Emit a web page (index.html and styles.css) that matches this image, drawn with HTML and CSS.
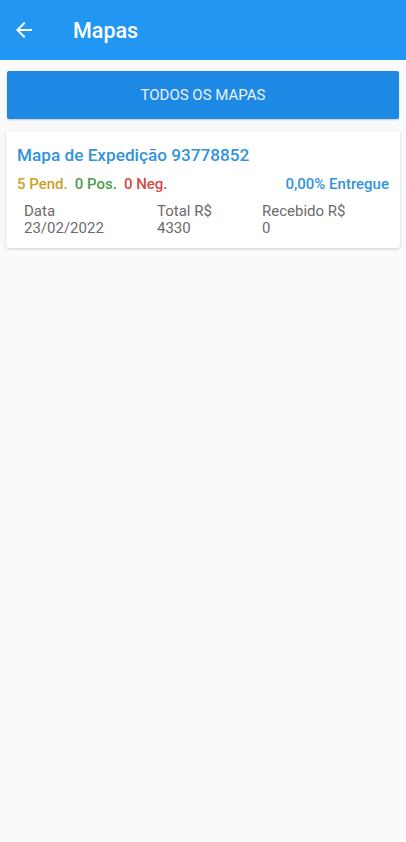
FILE: index.html
```html
<!DOCTYPE html>
<html lang="pt-BR">
<head>
    <meta charset="UTF-8">
    <meta name="viewport" content="width=device-width, initial-scale=1.0">
    <title>Mapas</title>
    <link rel="stylesheet" href="styles.css">
</head>
<body>
    <header class="app-bar">
        <button class="back-btn" aria-label="Voltar">
            <svg width="24" height="24" viewBox="0 0 24 24"><path d="M20 11H7.83l5.59-5.59L12 4l-8 8 8 8 1.41-1.41L7.83 13H20v-2z" fill="#fff"/></svg>
        </button>
        <h1 class="app-title">Mapas</h1>
    </header>

    <main class="content">
        <button class="all-btn">TODOS OS MAPAS</button>

        <div class="map-card">
            <h2 class="map-title">Mapa de Expedição 93778852</h2>
            <div class="status-row">
                <div class="counts">
                    <span class="pend">5 Pend.</span>
                    <span class="pos">0 Pos.</span>
                    <span class="neg">0 Neg.</span>
                </div>
                <span class="delivered">0,00% Entregue</span>
            </div>
            <div class="info-grid">
                <div class="info-col">
                    <span>Data</span>
                    <span>23/02/2022</span>
                </div>
                <div class="info-col">
                    <span>Total R$</span>
                    <span>4330</span>
                </div>
                <div class="info-col">
                    <span>Recebido R$</span>
                    <span>0</span>
                </div>
            </div>
        </div>
    </main>
</body>
</html>
```

FILE: styles.css
```css
body {
    margin: 0;
    font-family: Roboto, "Noto Sans", Arial, sans-serif;
    background-color: #fafafa;
    color: #666;
    min-height: 100vh;
}

.app-bar {
    height: 60px;
    background-color: #2196f3;
    display: flex;
    align-items: center;
    padding-left: 12px;
    box-sizing: border-box;
}

.back-btn {
    background: none;
    border: none;
    padding: 0;
    width: 24px;
    height: 24px;
    cursor: pointer;
}

.back-btn svg {
    display: block;
}

.app-title {
    margin: 0 0 0 37px;
    color: #fff;
    font-size: 21.5px;
    font-weight: 500;
}

.content {
    padding: 11px 6px;
}

.all-btn {
    display: block;
    width: calc(100% - 2px);
    margin: 0 0 0 1px;
    height: 48px;
    border: none;
    border-radius: 2px;
    background-color: #1e88e5;
    color: #eaf4fd;
    font-family: inherit;
    font-size: 15px;
    font-weight: 400;
    box-shadow: 0 1px 2px rgba(0, 0, 0, 0.2);
}

.map-card {
    margin-top: 12px;
    background-color: #fff;
    border-radius: 3px;
    box-shadow: 0 1px 3px rgba(0, 0, 0, 0.18);
    padding: 13px 11px 11px 11px;
}

.map-title {
    margin: 0;
    font-size: 17.2px;
    font-weight: 500;
    color: #3393d9;
    line-height: 22px;
}

.status-row {
    display: flex;
    justify-content: space-between;
    margin-top: 8px;
    font-size: 15px;
    font-weight: 500;
    line-height: 20px;
}

.counts {
    display: flex;
    gap: 7px;
}

.pend { color: #c9a227; }
.pos { color: #4d9d4d; }
.neg { color: #d44a45; }
.delivered { color: #3393d9; }

.info-grid {
    display: grid;
    grid-template-columns: 133px 105px 1fr;
    margin-top: 9px;
    padding-left: 7px;
    font-size: 15px;
    color: #6b6b6b;
    line-height: 17px;
}

.info-col {
    display: flex;
    flex-direction: column;
}
```
